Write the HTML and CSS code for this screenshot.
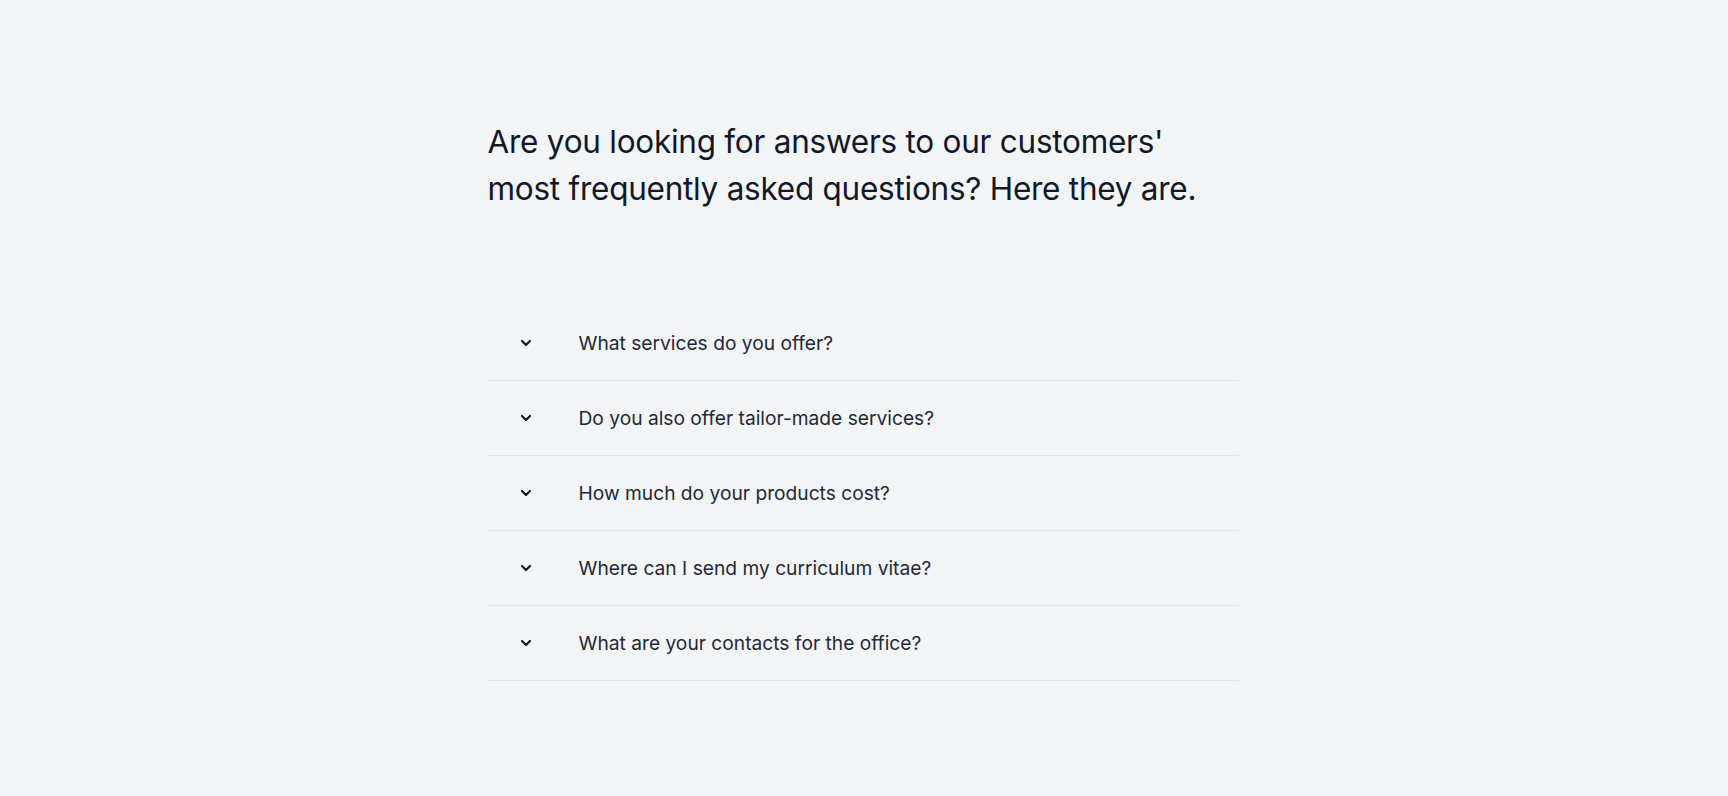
FILE: index.html
```html
<!DOCTYPE html>
<html lang="en">
<head>
  <meta charset="UTF-8">
  <title>FAQ</title>
  <link rel="stylesheet" href="styles.css">
</head>
<body>
  <main class="faq">
    <h1 class="faq-title">Are you looking for answers to our customers'<br>most frequently asked questions? Here they are.</h1>

    <ul class="faq-list">
      <li class="faq-item">
        <button class="faq-toggle" type="button">
          <span class="faq-icon"><svg viewBox="0 0 16 16" width="16" height="16"><polyline points="4,6 8,10 12,6"/></svg></span>
          <span class="faq-question">What services do you offer?</span>
        </button>
      </li>
      <li class="faq-item">
        <button class="faq-toggle" type="button">
          <span class="faq-icon"><svg viewBox="0 0 16 16" width="16" height="16"><polyline points="4,6 8,10 12,6"/></svg></span>
          <span class="faq-question">Do you also offer tailor-made services?</span>
        </button>
      </li>
      <li class="faq-item">
        <button class="faq-toggle" type="button">
          <span class="faq-icon"><svg viewBox="0 0 16 16" width="16" height="16"><polyline points="4,6 8,10 12,6"/></svg></span>
          <span class="faq-question">How much do your products cost?</span>
        </button>
      </li>
      <li class="faq-item">
        <button class="faq-toggle" type="button">
          <span class="faq-icon"><svg viewBox="0 0 16 16" width="16" height="16"><polyline points="4,6 8,10 12,6"/></svg></span>
          <span class="faq-question">Where can I send my curriculum vitae?</span>
        </button>
      </li>
      <li class="faq-item">
        <button class="faq-toggle" type="button">
          <span class="faq-icon"><svg viewBox="0 0 16 16" width="16" height="16"><polyline points="4,6 8,10 12,6"/></svg></span>
          <span class="faq-question">What are your contacts for the office?</span>
        </button>
      </li>
    </ul>
  </main>
</body>
</html>
```

FILE: styles.css
```css
body {
  margin: 0;
  background-color: #f3f4f6;
  font-family: Inter, 'Noto Sans', sans-serif;
  color: #111827;
}

.faq {
  width: 751px;
  margin: 0 auto;
  padding: 118px 0 0 0;
  box-sizing: border-box;
  position: relative;
  left: -1px;
}

.faq-title {
  margin: 0;
  font-size: 31.5px;
  font-weight: 400;
  line-height: 47px;
  letter-spacing: -0.25px;
  color: #111827;
}

.faq-list {
  list-style: none;
  margin: 94px 0 0 0;
  padding: 0;
}

.faq-item {
  border-bottom: 1px solid #e3e4e8;
}

.faq-toggle {
  display: flex;
  align-items: center;
  width: 100%;
  height: 74px;
  padding: 0;
  border: none;
  background: none;
  font-family: inherit;
  text-align: left;
  cursor: pointer;
}

.faq-icon {
  width: 76px;
  display: flex;
  justify-content: center;
  flex-shrink: 0;
}

.faq-icon svg {
  fill: none;
  stroke: #111827;
  stroke-width: 2.2;
  stroke-linecap: round;
  stroke-linejoin: round;
}

.faq-question {
  margin-left: 15px;
  font-size: 19.2px;
  color: #1f2937;
}
```
